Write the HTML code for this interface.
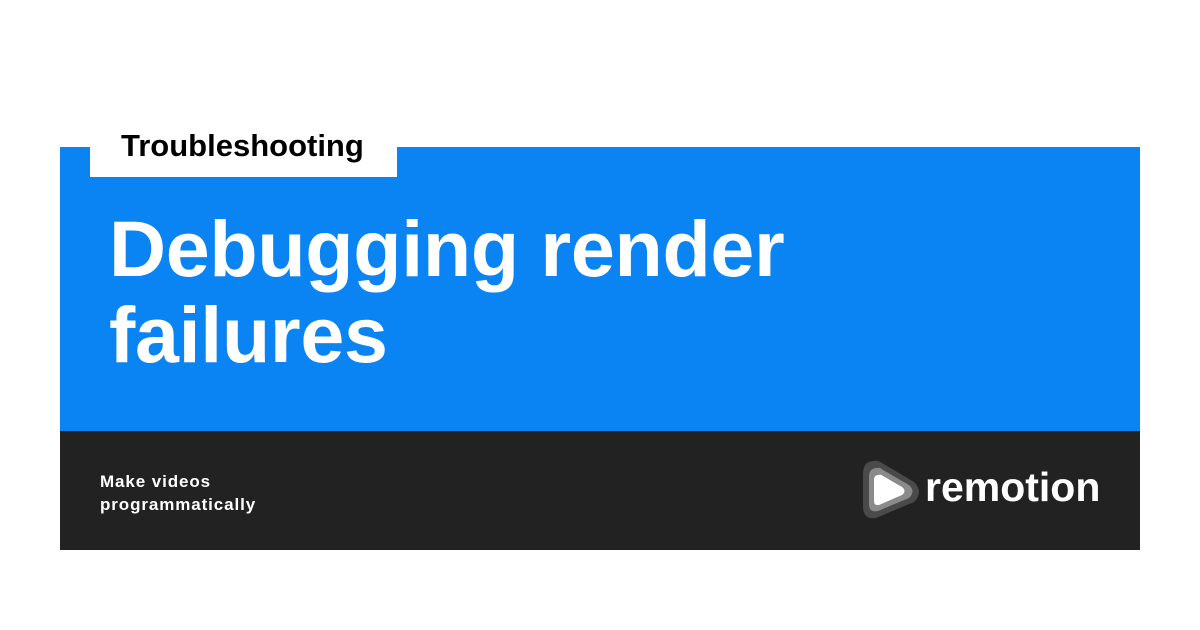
<!DOCTYPE html>
<html><head><style>
body{margin:0;width:1200px;height:630px;background:#fff;position:relative;font-family:"Liberation Sans",sans-serif;overflow:hidden}
.blue{position:absolute;left:60px;top:147px;width:1080px;height:284px;background:#0b84f3}
.dark{position:absolute;left:60px;top:431px;width:1080px;height:119px;background:#222}
.tag{position:absolute;left:90px;top:120px;width:307px;height:57px;background:#fff}
.tag span{position:absolute;left:31px;top:8px;font-size:31px;font-weight:bold;color:#000;letter-spacing:0px}
.title{position:absolute;left:109px;top:206px;font-size:79px;line-height:86px;font-weight:bold;color:#fff;letter-spacing:-0.3px}
.sub{position:absolute;left:100px;top:470px;font-size:17px;line-height:23px;font-weight:bold;color:#fff;letter-spacing:0.9px}
.logo{position:absolute;left:925px;top:464px;font-size:41px;font-weight:bold;color:#fff;letter-spacing:0px}
</style></head><body>
<div class="blue"></div>
<div class="dark"></div>
<div class="tag"><span>Troubleshooting</span></div>
<div class="title">Debugging render<br>failures</div>
<div class="sub">Make videos<br>programmatically</div>
<svg style="position:absolute;left:860px;top:458px" width="64" height="64" viewBox="0 0 64 64">
<path d="M14 3 Q3 3 3 16 L3 48 Q3 62 16 60 L54 44 Q64 34 54 24 L22 5 Q18 2 14 3Z" fill="#4a4a4a"/>
<path d="M17 10 Q9 10 9 19 L9 46 Q9 55 18 53 L49 40 Q56 33 49 27 L23 12 Q20 9 17 10Z" fill="#8a8a8a"/>
<path d="M18 17 Q14 17 14 22 L14 43 Q14 48 19 47 L42 37 Q47 33 42 29 L23 18 Q21 16 18 17Z" fill="#fff"/>
</svg>
<div class="logo">remotion</div>
</body></html>
